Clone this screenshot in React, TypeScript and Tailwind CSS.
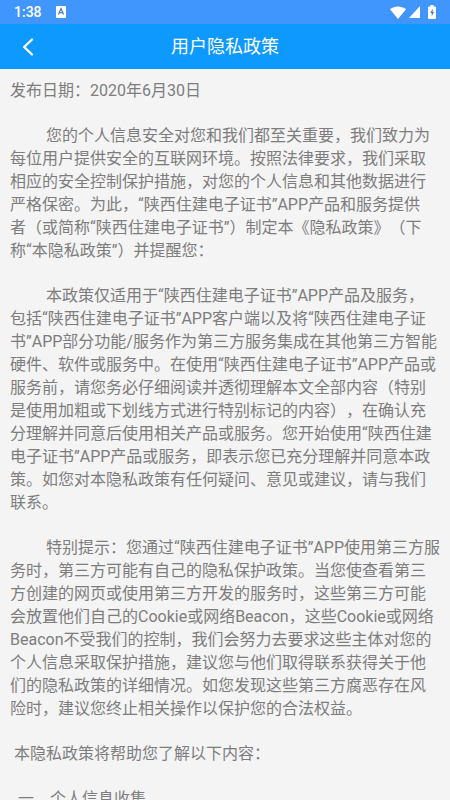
const PARAGRAPHS = [
  "您的个人信息安全对您和我们都至关重要，我们致力为每位用户提供安全的互联网环境。按照法律要求，我们采取相应的安全控制保护措施，对您的个人信息和其他数据进行严格保密。为此，“陕西住建电子证书”APP产品和服务提供\n者（或简称“陕西住建电子证书”）制定本《隐私政策》（下\n称“本隐私政策”）并提醒您：",
  "本政策仅适用于“陕西住建电子证书”APP产品及服务，\n包括“陕西住建电子证书”APP客户端以及将“陕西住建电子证书”APP部分功能/服务作为第三方服务集成在其他第三方智能硬件、软件或服务中。在使用“陕西住建电子证书”APP产品或服务前，请您务必仔细阅读并透彻理解本文全部内容（特别是使用加粗或下划线方式进行特别标记的内容），在确认充分理解并同意后使用相关产品或服务。您开始使用“陕西住建电子证书”APP产品或服务，即表示您已充分理解并同意本政策。如您对本隐私政策有任何疑问、意见或建议，请与我们联系。",
  "特别提示：您通过“陕西住建电子证书”APP使用第三方服务时，第三方可能有自己的隐私保护政策。当您使查看第三方创建的网页或使用第三方开发的服务时，这些第三方可能会放置他们自己的Cookie或网络Beacon，这些Cookie或网络Beacon不受我们的控制，我们会努力去要求这些主体对您的个人信息采取保护措施，建议您与他们取得联系获得关于他们的隐私政策的详细情况。如您发现这些第三方腐恶存在风险时，建议您终止相关操作以保护您的合法权益。",
];

function StatusBar() {
  return (
    <div className="flex h-6 items-center bg-[#4096fd] px-[14px] text-white">
      <span className="text-sm font-medium">1:38</span>
      <svg className="ml-[14px] h-3 w-[10px]" viewBox="0 0 10 12" aria-hidden="true">
        <rect width="10" height="12" rx="1" fill="#fff" />
        <path
          d="M2.4 8.4 5 2.6l2.6 5.8M3.3 6.6h3.4"
          fill="none"
          stroke="#4b80bd"
          strokeWidth="1.3"
        />
      </svg>
      <div className="ml-auto flex items-center">
        <svg className="h-[13px] w-4" viewBox="0 0 16 13" aria-hidden="true">
          <path d="M0 3.2C4.6-.4 11.4-.4 16 3.2L8 13z" fill="#fff" />
        </svg>
        <svg className="ml-[3px] h-3 w-[11px]" viewBox="0 0 11 12" aria-hidden="true">
          <path d="M11 0v12H0z" fill="#fff" />
        </svg>
        <svg className="ml-2 h-[14px] w-2" viewBox="0 0 8 14" aria-hidden="true">
          <path
            d="M2.4 0h3.2v1.5H7a1 1 0 0 1 1 1V13a1 1 0 0 1-1 1H1a1 1 0 0 1-1-1V2.5a1 1 0 0 1 1-1h1.4z"
            fill="#fff"
          />
          <path d="M4.7 3.8 2.3 8h1.4v3.4L6 7H4.7z" fill="#4b80bd" />
        </svg>
      </div>
    </div>
  );
}

function TitleBar() {
  return (
    <header className="grid h-[45px] grid-cols-[56px_1fr_56px] items-center bg-[#0d99fd] text-white">
      <button
        type="button"
        aria-label="返回"
        className="flex h-full items-center pl-[22px]"
      >
        <svg className="h-[18px] w-3" viewBox="0 0 12 18" aria-hidden="true">
          <path
            d="M10 1.5 2.2 9l7.8 7.5"
            fill="none"
            stroke="currentColor"
            strokeWidth="2.4"
            strokeLinecap="round"
            strokeLinejoin="round"
          />
        </svg>
      </button>
      <h1 className="text-center text-lg">用户隐私政策</h1>
    </header>
  );
}

export default function App() {
  return (
    <div
      lang="zh-CN"
      className="h-screen overflow-hidden bg-[#f4f4f4] font-['Roboto','Noto_Sans_CJK_SC',sans-serif] [text-spacing-trim:space-all]"
    >
      <StatusBar />
      <TitleBar />
      <main className="space-y-[22px] px-[10px] pt-[10px] text-base leading-[23px] text-[#7d7d7d]">
        <p>发布日期：2020年6月30日</p>
        {PARAGRAPHS.map((text) => (
          <p key={text} className="whitespace-pre-line indent-9">
            {text}
          </p>
        ))}
        <p className="indent-1">本隐私政策将帮助您了解以下内容：</p>
        <h2 className="indent-2">一、个人信息收集</h2>
      </main>
    </div>
  );
}
